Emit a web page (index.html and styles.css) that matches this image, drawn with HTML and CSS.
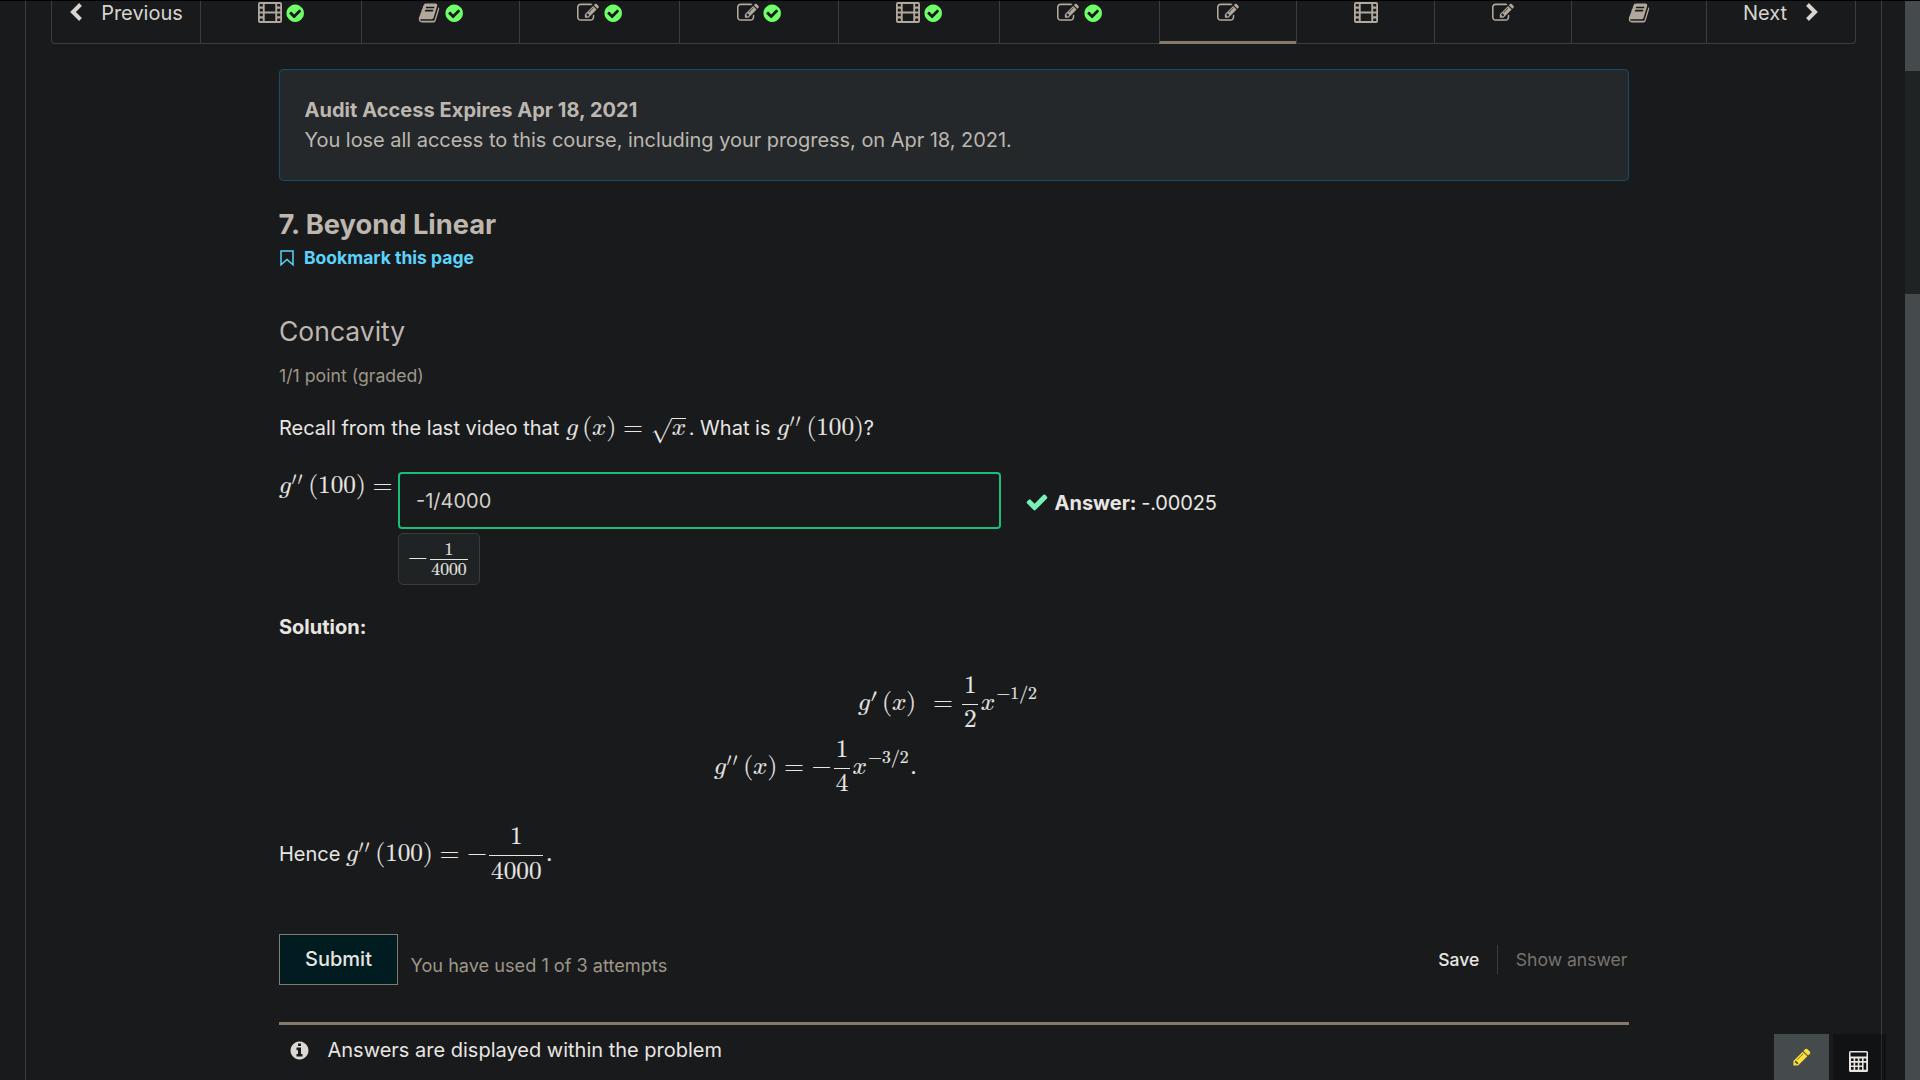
FILE: index.html
```html
<!DOCTYPE html>
<html lang="en">
<head>
<meta charset="utf-8">
<title>7. Beyond Linear</title>
<link rel="stylesheet" href="styles.css">
</head>
<body>
<svg class="defs" aria-hidden="true">
  <symbol id="check-circle" viewBox="0 0 1792 1792"><path d="M1412 734q0-28-18-46l-91-90q-19-19-45-19t-45 19l-408 407-226-226q-19-19-45-19t-45 19l-91 90q-18 18-18 46 0 27 18 45l362 362q19 19 45 19 27 0 46-19l543-543q18-18 18-45zm252 162q0 209-103 385.500t-279.500 279.500-385.500 103-385.500-103-279.500-279.500-103-385.500 103-385.500 279.500-279.500 385.500-103 385.500 103 279.500 279.500 103 385.500z"/></symbol>
  <symbol id="edit" viewBox="0 0 1792 1792"><path d="M888 1184l116-116-152-152-116 116v56h96v96h56zm440-720q-16-16-33 1l-350 350q-17 17-1 33t33-1l350-350q17-17 1-33zm80 594v190q0 119-84.500 203.500t-203.500 84.500h-832q-119 0-203.500-84.500t-84.500-203.500v-832q0-119 84.500-203.500t203.500-84.500h832q63 0 117 25 15 7 18 23 3 17-9 29l-49 49q-14 14-32 8-23-6-45-6h-832q-66 0-113 47t-47 113v832q0 66 47 113t113 47h832q66 0 113-47t47-113v-126q0-13 9-22l64-64q15-15 35-7t20 29zm-96-738l288 288-672 672h-288v-288zm444 132l-92 92-288-288 92-92q28-28 68-28t68 28l152 152q28 28 28 68t-28 68z"/></symbol>
  <symbol id="book" viewBox="0 0 1792 1792"><path d="M1703 478q40 57 18 129l-275 906q-19 64-76.500 107.500t-122.500 43.500h-923q-77 0-148.500-53.500t-99.500-131.500q-24-67-2-127 0-4 3-27t4-37q1-8-3-21.500t-3-19.500q2-11 8-21t16.500-23.500 16.500-23.500q23-38 45-91.500t30-91.500q3-10 .5-30t-.5-28q3-11 17-28t17-23q21-36 42-92t25-90q1-9-2.500-32t.5-28q4-13 22-30.500t22-22.500q19-26 42.500-84.500t27.500-96.500q1-8-3-25.500t-2-26.500q2-8 9-18t18-23 17-21q8-12 16.500-30.500t15-35 16-36 19.500-32 26.500-23.500 36-11.500 47.500 5.500l-1 3q38-9 51-9h761q74 0 114 56t18 130l-274 906q-36 119-71.500 153.500t-128.500 34.500h-869q-27 0-38 15-11 16-1 43 24 70 144 70h923q29 0 56-15.500t35-41.500l300-987q7-22 5-57 38 15 59 43zm-1064 2q-4 13 2 22.500t20 9.500h608q13 0 25.500-9.500t16.500-22.500l21-64q4-13-2-22.500t-20-9.500h-608q-13 0-25.500 9.500t-16.500 22.500zm-83 256q-4 13 2 22.500t20 9.500h608q13 0 25.500-9.500t16.500-22.500l21-64q4-13-2-22.500t-20-9.500h-608q-13 0-25.500 9.500t-16.500 22.500z"/></symbol>
  <symbol id="film" viewBox="0 0 24 21"><path fill-rule="evenodd" d="M2 0h20a2 2 0 0 1 2 2v17a2 2 0 0 1-2 2H2a2 2 0 0 1-2-2V2a2 2 0 0 1 2-2zM1.800 2v2.600h3V2zM1.800 6.800v2.600h3V6.800zM1.800 11.600v2.600h3v-2.600zM1.800 16.400V19h3v-2.600zM6.700 2v7.600h10.600V2zM6.700 11.400V19h10.600v-7.600zM19.200 2v2.600h3V2zM19.200 6.800v2.600h3V6.800zM19.200 11.600v2.600h3v-2.600zM19.200 16.400V19h3v-2.600z"/></symbol>
  <symbol id="check" viewBox="0 0 1792 1792"><path d="M1671 566q0 40-28 68l-724 724-136 136q-28 28-68 28t-68-28l-136-136-362-362q-28-28-28-68t28-68l136-136q28-28 68-28t68 28l294 295 656-657q28-28 68-28t68 28l136 136q28 28 28 68z"/></symbol>
  <symbol id="info" viewBox="0 0 1792 1792"><path d="M1152 1376v-160q0-14-9-23t-23-9h-96v-512q0-14-9-23t-23-9h-320q-14 0-23 9t-9 23v160q0 14 9 23t23 9h96v320h-96q-14 0-23 9t-9 23v160q0 14 9 23t23 9h448q14 0 23-9t9-23zm-128-896v-160q0-14-9-23t-23-9h-192q-14 0-23 9t-9 23v160q0 14 9 23t23 9h192q14 0 23-9t9-23zm640 416q0 209-103 385.500t-279.500 279.500-385.500 103-385.500-103-279.500-279.500-103-385.500 103-385.500 279.500-279.500 385.500-103 385.500 103 279.500 279.500 103 385.500z"/></symbol>
  <symbol id="pencil" viewBox="0 0 1792 1792"><path d="M491 1536l91-91-235-235-91 91v107h128v128h107zm523-928q0-22-22-22-10 0-17 7l-542 542q-7 7-7 17 0 22 22 22 10 0 17-7l542-542q7-7 7-17zm-54-192l416 416-832 832h-416v-416zm683 96q0 53-37 90l-166 166-416-416 166-165q36-38 90-38 53 0 91 38l235 234q37 39 37 91z"/></symbol>
</svg>

<div class="window">
  <main class="page">
    <nav class="sequence">
      <a class="step previous"><svg class="chevron" viewBox="0 0 12 18"><path d="M10.500 1.500L3 9l7.500 7.500"/></svg><span>Previous</span></a>
      <a class="step"><svg class="film"><use href="#film"/></svg><svg class="done"><use href="#check-circle"/></svg></a>
      <a class="step"><svg class="glyph"><use href="#book"/></svg><svg class="done"><use href="#check-circle"/></svg></a>
      <a class="step"><svg class="glyph edit"><use href="#edit"/></svg><svg class="done"><use href="#check-circle"/></svg></a>
      <a class="step"><svg class="glyph edit"><use href="#edit"/></svg><svg class="done"><use href="#check-circle"/></svg></a>
      <a class="step"><svg class="film"><use href="#film"/></svg><svg class="done"><use href="#check-circle"/></svg></a>
      <a class="step"><svg class="glyph edit"><use href="#edit"/></svg><svg class="done"><use href="#check-circle"/></svg></a>
      <a class="step active"><svg class="glyph edit"><use href="#edit"/></svg></a>
      <a class="step"><svg class="film"><use href="#film"/></svg></a>
      <a class="step"><svg class="glyph edit"><use href="#edit"/></svg></a>
      <a class="step"><svg class="glyph"><use href="#book"/></svg></a>
      <a class="step next"><span>Next</span><svg class="chevron" viewBox="0 0 12 18"><path d="M1.500 1.500L9 9l-7.500 7.500"/></svg></a>
    </nav>

    <div class="content">
      <section class="alert">
        <strong>Audit Access Expires Apr 18, 2021</strong>
        <p>You lose all access to this course, including your progress, on Apr 18, 2021.</p>
      </section>

      <h1>7. Beyond Linear</h1>
      <a class="bookmark"><svg viewBox="0 0 14 16"><path d="M1 1h12v13.800L7 9.500l-6 5.300z"/></svg>Bookmark this page</a>

      <h2>Concavity</h2>
      <p class="grade">1/1 point (graded)</p>

      <p class="question">Recall from the last video that <math class="root"><mi>g</mi><mspace width="0.167em"/><mo stretchy="false">(</mo><mi>x</mi><mo stretchy="false">)</mo><mo>=</mo><mspace width="0.04em"/><msqrt><mspace height="0.64em"/><mi>x</mi></msqrt></math>. What is <math><mi>g</mi><mo class="prime double" lspace="0" rspace="0">′′</mo><mspace width="0.167em"/><mo stretchy="false">(</mo><mn>100</mn><mo stretchy="false">)</mo></math>?</p>

      <div class="response">
        <div class="lhs"><math><mi>g</mi><mo class="prime double" lspace="0" rspace="0">′′</mo><mspace width="0.167em"/><mo stretchy="false">(</mo><mn>100</mn><mo stretchy="false">)</mo><mo>=</mo></math></div>
        <div class="entry">
          <div class="field">-1/4000</div>
          <div class="preview"><math><mo form="prefix">−</mo><mfrac><mn>1</mn><mn class="low">4000</mn></mfrac></math></div>
        </div>
        <div class="verdict"><svg><use href="#check"/></svg><span><strong>Answer:</strong> <span class="value">-.00025</span></span></div>
      </div>

      <p class="solution"><strong>Solution:</strong></p>
      <div class="equation first"><math displaystyle="true"><mi>g</mi><mo class="prime" lspace="0" rspace="0">′</mo><mspace width="0.167em"/><mo stretchy="false">(</mo><mi>x</mi><mo stretchy="false">)</mo><mspace width="0.4em"/><mo>=</mo><mfrac><mn>1</mn><mn>2</mn></mfrac><msup><mi>x</mi><mrow class="power"><mspace width="0.08em"/><mo form="prefix">−</mo><mn>1</mn><mo lspace="0" rspace="0" stretchy="false">/</mo><mn>2</mn></mrow></msup></math></div>
      <div class="equation second"><math displaystyle="true"><mi>g</mi><mo class="prime double" lspace="0" rspace="0">′′</mo><mspace width="0.167em"/><mo stretchy="false">(</mo><mi>x</mi><mo stretchy="false">)</mo><mo>=</mo><mspace width="0.04em"/><mo form="prefix">−</mo><mfrac><mn>1</mn><mn>4</mn></mfrac><msup><mi>x</mi><mrow class="power"><mspace width="0.08em"/><mo form="prefix">−</mo><mn>3</mn><mo lspace="0" rspace="0" stretchy="false">/</mo><mn>2</mn></mrow></msup><mtext>.</mtext></math></div>
      <p class="hence">Hence <math displaystyle="true"><mi>g</mi><mo class="prime double" lspace="0" rspace="0">′′</mo><mspace width="0.167em"/><mo stretchy="false">(</mo><mn>100</mn><mo stretchy="false">)</mo><mo>=</mo><mspace width="0.04em"/><mo form="prefix">−</mo><mfrac><mn>1</mn><mn class="low">4000</mn></mfrac><mtext>.</mtext></math></p>

      <div class="actions">
        <button class="submit">Submit</button>
        <span class="attempts">You have used 1 of 3 attempts</span>
        <span class="save">Save</span>
        <span class="show">Show answer</span>
      </div>

      <div class="notice"><svg><use href="#info"/></svg><span>Answers are displayed within the problem</span></div>
    </div>
  </main>

  <aside class="scrollbar"><div class="head"></div><div class="thumb"></div></aside>

  <div class="tools">
    <div class="tool notes"><svg><use href="#pencil"/></svg></div>
    <div class="tool calculator"><svg viewBox="0 0 19 21"><path fill-rule="evenodd" d="M1.500 0h16A1.500 1.500 0 0 1 19 1.500v18a1.500 1.500 0 0 1-1.500 1.500h-16A1.500 1.500 0 0 1 0 19.500v-18A1.500 1.500 0 0 1 1.500 0zM1.500 1.500v4h16v-4zM2 7.500v2.600h2.600V7.500zM6.200 7.500v2.600h2.600V7.500zM10.400 7.500v2.600H13V7.500zM14.600 7.500v2.600h2.600V7.500zM2 11.800v2.600h2.600v-2.600zM6.200 11.800v2.600h2.600v-2.600zM10.400 11.800v2.600H13v-2.600zM14.600 11.800v6.900h2.600v-6.900zM2 16.100v2.600h2.600v-2.600zM6.200 16.100v2.600h2.600v-2.600zM10.400 16.100v2.600H13v-2.600z"/></svg></div>
  </div>
</div>
</body>
</html>
```

FILE: styles.css
```css
* { box-sizing: border-box; }
body { margin: 0; background: #191a1c; color: #e8e6e3; font: 20px/30px Inter, "Liberation Sans", sans-serif; overflow: hidden; }
h1, h2, p { margin: 0; }
svg { fill: currentColor; flex: none; display: block; }
.defs { position: absolute; width: 0; height: 0; }

.window { height: 1080px; display: flex; border-top: 1px solid #000; }
.page { width: 1857px; margin-left: 25px; border: solid #3b3e40; border-width: 0 1px; padding: 0 25px; }

.sequence { height: 43px; width: 1805px; display: grid; grid-template-columns: 148px 161px 158px 160px 159px 161px 160px 137px 138px 137px 135px 1fr; border: solid #3b3e40; border-width: 0 1px 1px; border-radius: 0 0 4px 4px; color: #b2a99c; }
.step { display: flex; justify-content: center; gap: 5px; height: 42px; padding-top: 1px; border-left: 1px solid #3b3e40; }
.step:first-child { border-left: 0; }
.step.active { height: 43px; border-bottom: 3px solid #857a6b; }
.film { width: 24px; height: 21px; }
.glyph { width: 22px; height: 22px; }
.edit { margin-top: -.5px; }
.done { width: 20.4px; height: 20.4px; color: #6fff68; margin: 1px -1.5px 0; }
.previous, .next { color: #d8d4cf; padding-top: 0; line-height: 25px; }
.previous { gap: 19px; padding-left: 1px; }
.next { gap: 18.5px; padding-right: 1.5px; }
.chevron { width: 12px; height: 18px; margin-top: 2px; fill: none; stroke: currentColor; stroke-width: 4; }

.content { width: 1350px; margin: 25px 0 0 228px; }
.alert { height: 112px; padding: 25px 24.5px; border: 1px solid #164c66; border-radius: 4px; background: #24282b; color: #bdb7af; }
.alert strong { display: block; letter-spacing: .04px; }
.alert p { letter-spacing: -.04px; }
h1 { margin-top: 25px; font-size: 27.3px; line-height: 38px; color: #bdb7af; text-indent: -.5px; }
.bookmark { display: flex; align-items: center; gap: 10px; height: 28px; font-size: 17.500px; font-weight: 700; color: #5bd3fb; }
.bookmark svg { width: 14px; height: 16px; margin-left: 1px; fill: none; stroke: currentColor; stroke-width: 1.500; }
h2 { margin-top: 36px; font-size: 26.5px; line-height: 46px; font-weight: 400; color: #bdb7af; }
.grade { margin-top: 7px; font-size: 17.700px; line-height: 30px; color: #9e9689; }

math { font-family: "Latin Modern Math", math; font-size: 25.200px; -webkit-text-stroke: .2px; }
mfrac { margin: 0 .06em; }
mfrac > mn { padding: 0 .07em; }
.low { transform: translateY(1px); }
.power { transform: translateY(-2px); }
.prime { transform: scale(1, 1.2); transform-origin: 0 0; }
.prime.double { transform: scale(.78, 1.2); margin-right: -2.6px; }
.question { margin-top: 14px; height: 46px; line-height: 46px; }
.question math { margin-left: 1px; }
.question .root { margin-right: -3px; }
.response { display: flex; margin-top: 12px; height: 122px; }
.lhs { width: 114px; line-height: 46px; white-space: nowrap; }
.entry { margin: 9px 0 0 5px; }
.field { width: 603px; height: 57px; padding: 12px 16px; border: 2px solid #17bf78; border-radius: 4px; color: #d3cfc9; }
.preview { width: 82px; height: 52px; margin-top: 4px; padding: 9px 9px 0; border: 1px solid #383c3e; border-radius: 5px; background: #1f2324; }
.verdict { display: flex; align-items: center; gap: 6px; height: 57px; margin: 11px 0 0 23.5px; }
.verdict svg { width: 24px; height: 24px; margin-top: -2px; color: #7af0b9; }
.value { margin-left: -1px; letter-spacing: -.15px; }
.solution { margin-top: 27px; }
.equation { height: 64px; line-height: 64px; }
.first { margin: 29px 0 0 579px; }
.second { margin-left: 435px; }
.hence { margin-top: 15px; height: 80px; line-height: 80px; }

.actions { display: flex; align-items: center; margin-top: 40px; height: 51px; }
.submit { width: 119px; height: 51px; padding: 0 0 1px; border: 1px solid #857a6b; background: #001c20; color: #e8e6e3; font: 500 20px Inter, sans-serif; }
.attempts { margin: 11px auto 0 12.5px; font-size: 18.150px; color: #9e9689; }
.save { font-size: 17.500px; font-weight: 500; }
.show { margin-left: 18px; padding: 0 1.5px 0 17.5px; border-left: 1px solid #3b3e40; font-size: 17.600px; line-height: 29px; color: #77746f; }
.notice { display: flex; align-items: center; gap: 17.5px; height: 52px; margin-top: 37px; padding-left: 10px; border-top: 3px solid #857a6b; }
.notice svg { width: 21px; height: 21px; margin-top: 1px; color: #dcd8d3; }

.scrollbar { width: 15px; margin-left: auto; background: #1f2324; }
.head { height: 70px; background: #454a4d; }
.thumb { height: 786px; margin-top: 223px; background: #454a4d; }
.tools { position: absolute; left: 1774px; bottom: 0; display: flex; gap: 4px; height: 46px; }
.notes { width: 55px; padding: 13px 0 0 18px; background: #454a4d; color: #ffe135; }
.notes svg { width: 20px; height: 20px; }
.calculator { width: 53px; padding: 17px 0 0 16px; background: rgba(0, 0, 0, .3); color: #e8e6e3; }
.calculator svg { width: 19px; height: 21px; }
```
